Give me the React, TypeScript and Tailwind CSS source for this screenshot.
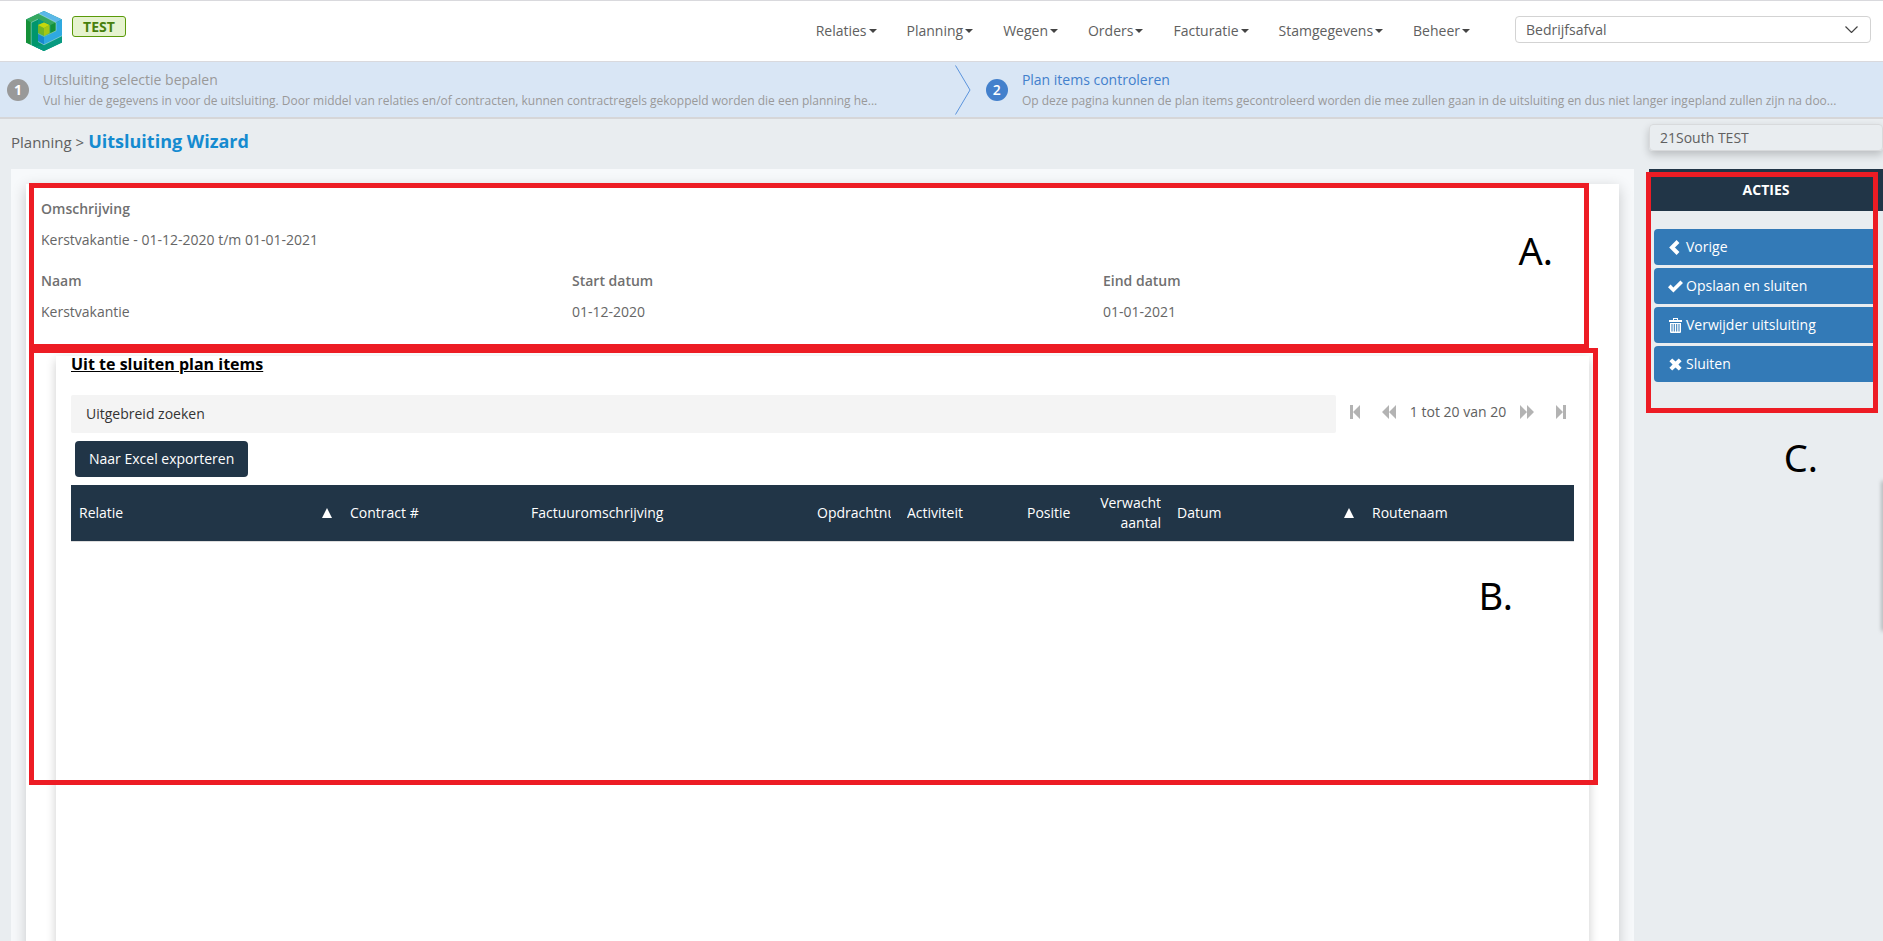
import React from "react";

const navItems = ["Relaties", "Planning", "Wegen", "Orders", "Facturatie", "Stamgegevens", "Beheer"];

const steps = [
  {
    title: "Uitsluiting selectie bepalen",
    text: "Vul hier de gegevens in voor de uitsluiting. Door middel van relaties en/of contracten, kunnen contractregels gekoppeld worden die een planning he...",
    active: false,
  },
  {
    title: "Plan items controleren",
    text: "Op deze pagina kunnen de plan items gecontroleerd worden die mee zullen gaan in de uitsluiting en dus niet langer ingepland zullen zijn na doo...",
    active: true,
  },
];

const columns = [
  { label: "Relatie", width: 271, sorted: true },
  { label: "Contract #", width: 181 },
  { label: "Factuuromschrijving", width: 286 },
  { label: "Opdrachtnummer", width: 90 },
  { label: "Activiteit", width: 120 },
  { label: "Positie", width: 60 },
  { label: "Verwacht aantal", width: 90, right: true },
  { label: "Datum", width: 195, sorted: true },
  { label: "Routenaam", width: 210 },
];
const totalWidth = columns.reduce((sum, c) => sum + c.width, 0);

const actions = [
  {
    label: "Vorige",
    icon: <path d="M10 1.500 4 7.500l6 6" fill="none" stroke="currentColor" strokeWidth="4" />,
  },
  {
    label: "Opslaan en sluiten",
    icon: <path d="M0 8.2 2.6 5.6 5.4 8.4 12.4 1.4 15 4 5.4 13.6Z" />,
  },
  {
    label: "Verwijder uitsluiting",
    icon: (
      <path
        fillRule="evenodd"
        d="M5 0h5v2h4v2H1V2h4Zm1 1v1h3V1ZM2 5h11v9.2l-.8.8H2.8L2 14.200ZM3.500 6v7.500h1V6Zm2.300 0v7.500h1V6Zm2.400 0v7.500h1V6Zm2.300 0v7.500h1V6Z"
      />
    ),
  },
  {
    label: "Sluiten",
    icon: <path d="M1.400 4.200 4.200 1.400 7.500 4.600 10.800 1.400 13.600 4.200 10.400 7.500 13.600 10.800 10.800 13.600 7.500 10.400 4.200 13.600 1.400 10.800 4.600 7.500Z" />,
  },
];

function Logo() {
  return (
    <svg width="36" height="40" viewBox="0 0 36 40" role="img" aria-label="Logo">
      <path d="M18 0 36 8.500V31.500L18 40 0 31.500V8.500Z" fill="#079a80" />
      <path d="M0 8.500 5.200 11V34L0 31.500Z" fill="#159038" />
      <path d="M0 8.500 12.500 2.500 30 11.500V20L24.500 23V14L12.500 8 5.200 11.500Z" fill="#35a860" />
      <path d="M24.500 14 30 11.500V20L24.500 23Z" fill="#12903a" />
      <path d="M12.500 2.500 18 0 36 8.500 30 11.500Z" fill="#5bb8e8" />
      <path d="M36 8.500V25L18 34V26L30 20V11.500Z" fill="#2fa9e0" />
      <path d="M5.200 11.500 12 8.200V30L18 33.500V40L5.200 34Z" fill="#00966c" />
      <path d="M18 33.800 36 25V31.500L18 40 9 35.700Z" fill="#079a80" />
      <path d="M12 23 18 26V34L12 30.500Z" fill="#1788cf" />
      <path d="M12 14 18 11.500 23.500 14V22L18 25 12 22Z" fill="#72b626" />
      <path d="M12 14 18 11.500 23.500 14 18 17Z" fill="#c5d80c" />
      <path d="M18 17 23.500 14V22L18 25Z" fill="#a5c715" />
      <path d="M5.200 34V11.500L12 8.200M12 22.500 18 25.500 30 19.800V11.500L12.500 2.500M12 30.500l6 3.300 18-9" fill="none" stroke="#d9f2e6" strokeOpacity=".75" strokeWidth=".6" />
    </svg>
  );
}

function PagerButton({ label, d, width }: { label: string; d: string; width: number }) {
  return (
    <button type="button" aria-label={label} className="text-[#b3b3b3]">
      <svg width={width} height="14" viewBox={`0 0 ${width} 14`} fill="currentColor">
        <path d={d} />
      </svg>
    </button>
  );
}

function Field({ label, value }: { label: string; value: string }) {
  return (
    <div className="px-[15px] pb-[9px]">
      <div className="h-[31px] text-sm leading-[31px] font-semibold text-[#707070]">{label}</div>
      <div className="h-[31px] text-sm leading-[31px] text-[#666]">{value}</div>
    </div>
  );
}

export default function App() {
  return (
    <div className="relative min-h-screen overflow-hidden bg-[#e9edf0] font-['Open_Sans',sans-serif] text-sm text-[#606060]">
      <header className="flex h-[62px] justify-between border-t border-b border-[#d9d9dd] bg-white pr-3 pl-[26px]">
        <div className="flex gap-[10px]">
          <div className="pt-[10px]">
            <Logo />
          </div>
          <span className="mt-[15px] h-[21px] w-[54px] rounded-[3px] border border-[#5a9a0a] bg-[#e6f3cf] text-center text-sm leading-[20px] font-bold text-[#48800c]">
            TEST
          </span>
        </div>
        <div className="flex">
          <nav className="flex pt-[15px] pr-[30px]">
            {navItems.map((item) => (
              <a key={item} href="#" className="flex h-[30px] items-center px-[15px] whitespace-nowrap">
                {item}
                <svg className="ml-0.5" width="8" height="4" viewBox="0 0 8 4" fill="#444">
                  <path d="M0 0h8L4 4Z" />
                </svg>
              </a>
            ))}
          </nav>
          <div className="relative mt-[15px] h-[27px] w-[356px]">
            <select aria-label="Afvalsoort" className="h-full w-full appearance-none rounded border border-[#d3d3d3] bg-white px-[10px] text-sm">
              <option>Bedrijfsafval</option>
            </select>
            <svg className="pointer-events-none absolute top-[10px] right-[13px]" width="13" height="7" viewBox="0 0 13 7" fill="none" stroke="#444" strokeWidth="1.2">
              <path d="m.5.500 6 6 6-6" />
            </svg>
          </div>
        </div>
      </header>

      <ol className="flex h-[57px] border-b-2 border-[#d6d6d8] bg-[#d9e6f5]">
        {steps.map((step) => (
          <li key={step.title} className={step.active ? "flex min-w-0 flex-[12] items-center gap-[14px] pl-[7px]" : "flex min-w-0 flex-[13] items-center gap-[14px] pl-[7px]"}>
            <span
              className={
                step.active
                  ? "flex size-[22px] shrink-0 items-center justify-center rounded-full bg-[#4380cc] text-sm font-semibold text-white"
                  : "flex size-[22px] shrink-0 items-center justify-center rounded-full bg-[#999] text-sm font-bold text-white"
              }
            >
              {step.active ? 2 : 1}
            </span>
            <div className="min-w-0 flex-1">
              <div className={step.active ? "h-[21px] text-sm leading-[21px] text-[#4380cc]" : "h-[21px] text-sm leading-[21px] text-[#999]"}>{step.title}</div>
              <div className="h-[21px] truncate text-xs leading-[21px] text-[#999]">{step.text}</div>
            </div>
            {!step.active && (
              <svg className="mr-2 shrink-0" width="16" height="50" viewBox="0 0 16 50" fill="none" stroke="#5b93dc">
                <path d="m.5.500 14.500 24.500L.5 49.500" />
              </svg>
            )}
          </li>
        ))}
      </ol>

      <div className="flex gap-[15px] pl-[11px]">
        <main className="min-w-0 flex-1">
          <h1 className="flex h-[50px] items-baseline gap-1 pt-2 text-[15px] leading-[28px]">
            <span>Planning &gt;</span>
            <span className="text-lg leading-[28px] font-bold text-[#158bd0]">Uitsluiting Wizard</span>
          </h1>
          <div className="bg-[#f7f9fb] px-[15px] pt-[15px]">
            <div className="bg-white pt-[9px] shadow-[0_4px_14px_rgba(0,0,0,0.2)]">
              <Field label="Omschrijving" value="Kerstvakantie - 01-12-2020 t/m 01-01-2021" />
              <div className="grid grid-cols-3 pt-px">
                <Field label="Naam" value="Kerstvakantie" />
                <Field label="Start datum" value="01-12-2020" />
                <Field label="Eind datum" value="01-01-2021" />
              </div>
              <section className="mx-[30px] mt-5 min-h-[600px] bg-white px-[15px] shadow-[0_4px_10px_rgba(0,0,0,0.2)]">
                <h2 className="h-[39px] text-base leading-4 font-bold text-black underline">Uit te sluiten plan items</h2>
                <div className="flex h-[38px] items-start">
                  <button type="button" className="h-[38px] flex-1 rounded-xs bg-[#f4f4f4] px-[15px] text-left text-[#333]">
                    Uitgebreid zoeken
                  </button>
                  <div className="flex h-[33px] items-center justify-between pr-2 pl-[14px]">
                    <PagerButton label="Eerste" width={10} d="M0 0h3v14H0ZM10 0v14L3 7Z" />
                    <span className="w-[22px]" />
                    <PagerButton label="Vorige pagina" width={14} d="M7 0v14L0 7ZM14 0v14L7 7Z" />
                    <span className="w-[124px] text-center whitespace-nowrap">1 tot 20 van 20</span>
                    <PagerButton label="Volgende pagina" width={14} d="M0 0v14l7-7ZM7 0v14l7-7Z" />
                    <span className="w-[22px]" />
                    <PagerButton label="Laatste" width={10} d="M7 0h3v14H7ZM0 0v14l7-7Z" />
                  </div>
                </div>
                <button type="button" className="mt-2 ml-1 block h-[36px] rounded bg-[#213547] px-[14px] text-white">
                  Naar Excel exporteren
                </button>
                <table className="mt-2 w-full table-fixed border-b border-[#ddd] text-white">
                  <thead className="bg-[#213547]">
                    <tr className="h-14">
                      {columns.map((c) => (
                        <th
                          key={c.label}
                          style={{ width: `${(c.width / totalWidth) * 100}%` }}
                          className={c.right ? "px-2 text-right text-sm leading-5 font-medium" : "px-2 text-left text-sm leading-5 font-medium whitespace-nowrap"}
                        >
                          <div className="flex items-center justify-between overflow-hidden">
                            <span className={c.right ? "w-full" : ""}>{c.label}</span>
                            {c.sorted && (
                              <svg className="mr-0.5 shrink-0" width="10" height="10" viewBox="0 0 10 10" fill="#fff">
                                <path d="M5 0 10 10H0Z" />
                              </svg>
                            )}
                          </div>
                        </th>
                      ))}
                    </tr>
                  </thead>
                  <tbody />
                </table>
              </section>
            </div>
          </div>
        </main>

        <aside className="w-[234px] shrink-0 pt-[5px]">
          <div className="h-[27px] rounded border border-[#d8dadc] px-[10px] leading-[26px] shadow-[0_4px_8px_rgba(0,0,0,0.2)]">21South TEST</div>
          <h2 className="mt-[18px] h-[42px] bg-[#213547] text-center text-sm leading-[42px] font-bold text-white">ACTIES</h2>
          <div className="flex flex-col gap-[3px] px-[5px] pt-[18px]">
            {actions.map((a) => (
              <button key={a.label} type="button" className="flex h-[36px] items-center gap-[3px] rounded bg-[#337ab7] pl-[14px] text-white">
                <svg width="15" height="15" viewBox="0 0 15 15" fill="currentColor">
                  {a.icon}
                </svg>
                {a.label}
              </button>
            ))}
          </div>
        </aside>
      </div>

      <div className="absolute top-[482px] -right-px h-[148px] w-px shadow-[0_0_4px_1px_rgba(0,0,0,0.35)]" />

      <div className="pointer-events-none absolute top-[183px] right-[294px] left-[29px] h-[166px] border-5 border-[#ed1c24]" />
      <div className="pointer-events-none absolute top-[348px] right-[285px] left-[29px] h-[437px] border-5 border-[#ed1c24]" />
      <div className="pointer-events-none absolute top-[172px] right-[5px] h-[241px] w-[232px] border-5 border-[#ed1c24]" />
      <span className="absolute top-[230px] right-[330px] font-['Noto_Sans',sans-serif] text-[38px] leading-[40px] text-black">A.</span>
      <span className="absolute top-[575px] right-[370px] font-['Noto_Sans',sans-serif] text-[38px] leading-[40px] text-black">B.</span>
      <span className="absolute top-[437px] right-[65px] font-['Noto_Sans',sans-serif] text-[38px] leading-[40px] text-black">C.</span>
    </div>
  );
}
